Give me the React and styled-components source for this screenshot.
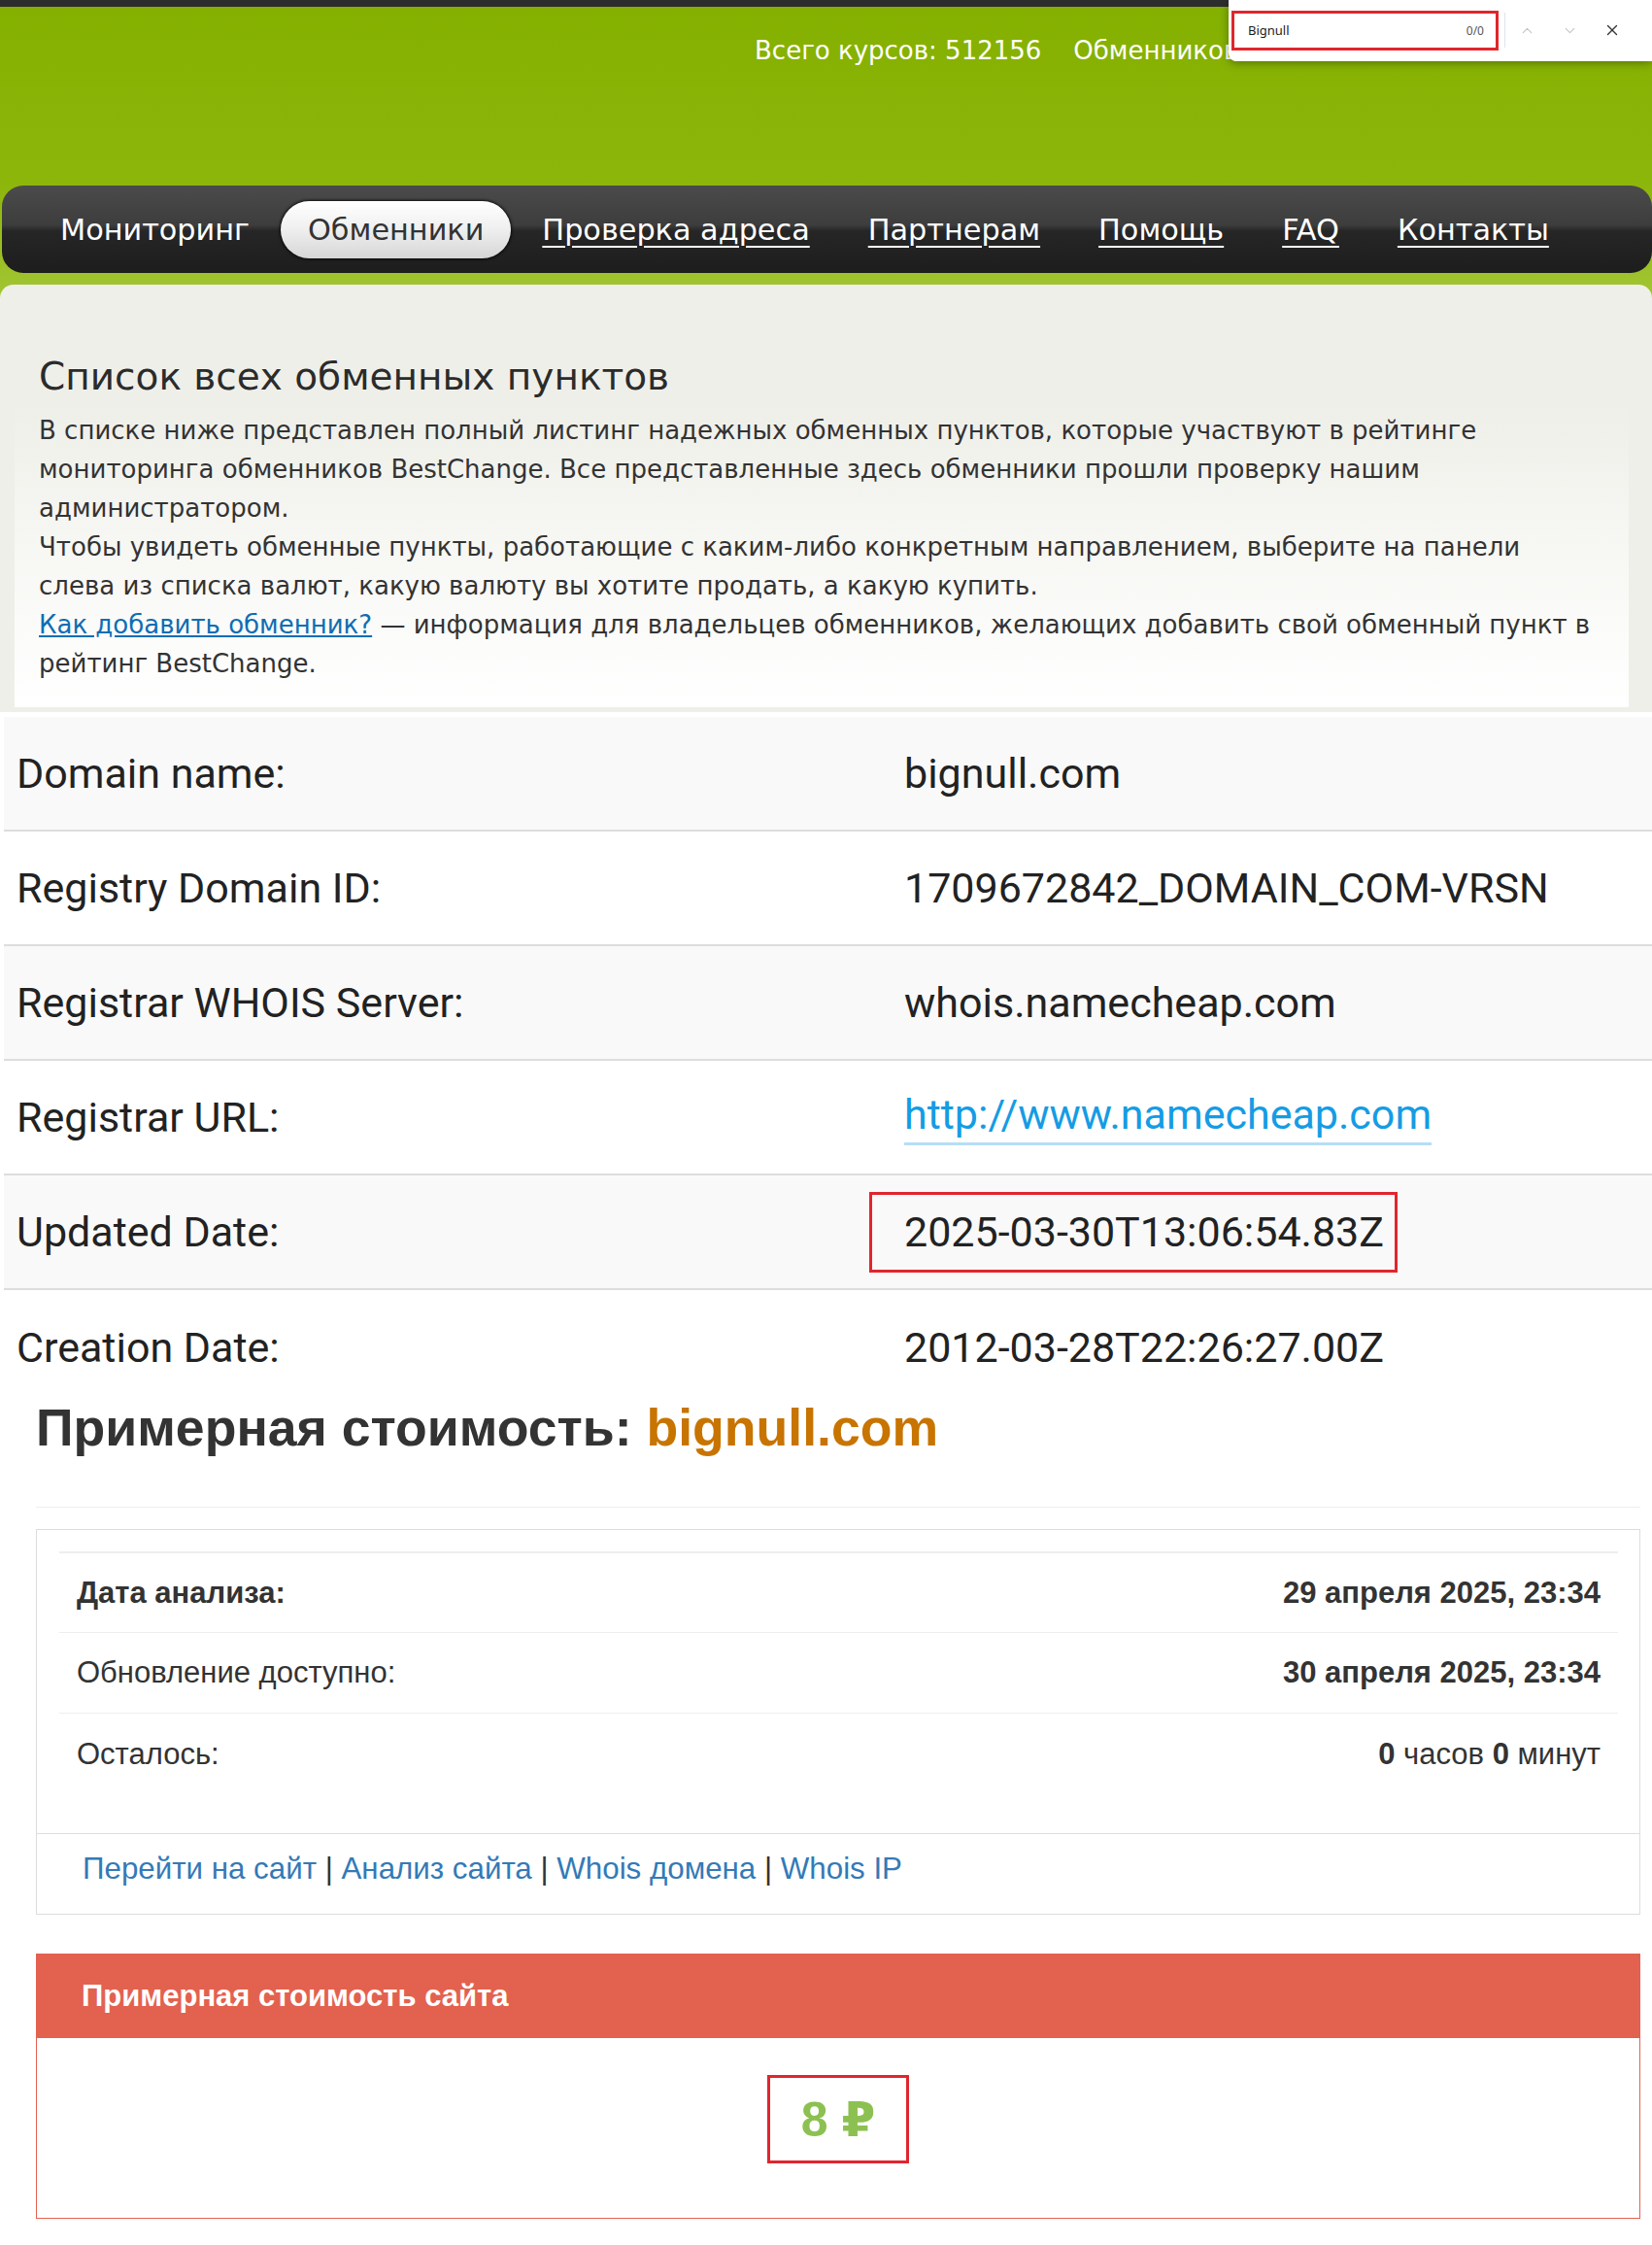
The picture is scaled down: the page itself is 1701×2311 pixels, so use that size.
import React from 'react'
import styled, { createGlobalStyle } from 'styled-components'
import { ChevronUp, ChevronDown, X } from 'lucide-react'

const GlobalStyle = createGlobalStyle`
  body {
    margin: 0;
    background: #fff;
    font-family: "Liberation Sans", Arial, sans-serif;
  }
  * { box-sizing: border-box; }
`

const colors = {
  dark: '#2d2d2d',
  text: '#333',
  grey: '#efefe9',
  red: '#e0262d',
  coral: '#e3614f',
  green: '#8cc152',
}

const tahoma = `"DejaVu Sans", Verdana, sans-serif`
const arial = `"Liberation Sans", Arial, "DejaVu Sans", sans-serif`

const Page = styled.div`
  position: relative;
  width: 1701px;
  padding-bottom: 27px;
  border-top: 7px solid ${colors.dark};
  background-color: #fff;
  background-image: linear-gradient(180deg, #84b000 0px, #8db60b 180px, #a0c430 290px);
  background-size: 100% 300px;
  background-repeat: no-repeat;
`

const Stats = styled.div`
  display: flex;
  gap: 33px;
  height: 184px;
  padding: 29px 0 0 777px;
  font-family: ${tahoma};
  font-size: 26px;
  line-height: 32px;
  color: #fff;
  white-space: nowrap;
  overflow: hidden;
`

const Nav = styled.nav`
  display: flex;
  align-items: center;
  gap: 4px;
  height: 90px;
  margin-left: 2px;
  padding-left: 32px;
  border-radius: 22px;
  background: linear-gradient(180deg, #4b4b4b 0%, #3d3d3d 45%, #262626 52%, #1d1d1d 100%);
`

const NavItem = styled.a`
  display: inline-flex;
  align-items: center;
  height: 59px;
  padding: 0 28px;
  font-family: ${tahoma};
  font-size: 30.3px;
  color: #fff;
  white-space: nowrap;
  text-decoration: ${({ $underline }) => ($underline ? 'underline' : 'none')};
  text-decoration-thickness: 2px;
  text-underline-offset: 6px;
`

const NavPill = styled(NavItem)`
  border-radius: 30px;
  color: #333;
  background: linear-gradient(180deg, #ffffff 0%, #f1f1f1 45%, #d6d6d6 100%);
  box-shadow: 0 0 3px 1px rgba(0, 0, 0, 0.8);
`

const Content = styled.div`
  margin-top: 12px;
  padding: 72px 24px 5px 15px;
  background: ${colors.grey};
  border-radius: 14px 14px 0 0;
`

const Title = styled.h1`
  margin: 0 0 4px;
  padding-left: 25px;
  font-family: ${tahoma};
  font-weight: normal;
  font-size: 39px;
  line-height: 46px;
  color: #2b2b2b;
`

const Intro = styled.div`
  padding: 8px 25px 25px;
  background: linear-gradient(180deg, ${colors.grey} 0%, #fff 100%);
  font-family: ${tahoma};
  font-size: 26px;
  line-height: 40px;
  color: ${colors.text};
  white-space: nowrap;
`

const IntroLink = styled.a`
  color: #0e6db3;
  text-decoration: underline;
`

const Whois = styled.div`
  margin: 5px 0 0 4px;
`

const WhoisRow = styled.div`
  display: grid;
  grid-template-columns: 914px 1fr;
  align-items: center;
  height: 118px;
  padding-left: 13px;
  background: ${({ $shade }) => ($shade ? '#f9f9f9' : '#fff')};
  border-bottom: ${({ $last }) => ($last ? 'none' : '2px solid #ddd')};
  font-family: Roboto, "Liberation Sans", sans-serif;
  font-size: 43px;
  line-height: 50px;
  color: #222;
`

const Value = styled.span`
  position: relative;
  justify-self: start;
`

const Marked = styled(Value)`
  &::after {
    content: '';
    position: absolute;
    left: -36px;
    right: -14px;
    top: -16px;
    bottom: -17px;
    border: 3px solid ${colors.red};
  }
`

const UrlLink = styled.a`
  display: inline-block;
  padding-bottom: 4px;
  color: #159ce4;
  text-decoration: none;
  border-bottom: 3px solid #b6def5;
`

const Estimate = styled.section`
  padding: 0 12px 0 37px;
  font-family: ${arial};
  color: ${colors.text};
`

const EstimateTitle = styled.h2`
  margin: 0;
  font-size: 53.6px;
  line-height: 46px;
  font-weight: bold;
  color: #333;

  span {
    color: #c87400;
  }
`

const Divider = styled.hr`
  margin: 59px 0 0;
  border: 0;
  border-top: 1px solid #eee;
`

const Card = styled.div`
  margin-top: ${({ $gap }) => $gap}px;
  border: 1px solid ${({ $accent }) => $accent || '#ddd'};
  background: #fff;
`

const CardBody = styled.div`
  padding: 22px 22px 40px 23px;
`

const InfoRow = styled.div`
  display: flex;
  justify-content: space-between;
  align-items: center;
  height: ${({ $first }) => ($first ? '84px' : '83px')};
  padding: 0 18px;
  border-top: ${({ $first }) => ($first ? '2px solid #eee' : 'none')};
  border-bottom: ${({ $last }) => ($last ? 'none' : '1px solid #eee')};
  font-size: 31px;
  color: #333;
`

const Label = styled.span`
  font-weight: ${({ $bold }) => ($bold ? 'bold' : 'normal')};
`

const Strong = styled.b`
  font-weight: bold;
`

const CardFooter = styled.div`
  padding: 20px 47px 30px;
  border-top: 1px solid #ddd;
  font-size: 31.3px;
  line-height: 32px;
  color: #333;
`

const FooterLink = styled.a`
  color: #337ab7;
  text-decoration: none;
`

const CardHeader = styled.div`
  display: flex;
  align-items: center;
  height: 86px;
  padding-left: 46px;
  background: ${colors.coral};
  font-size: 31px;
  font-weight: bold;
  color: #fff;
`

const PriceBody = styled.div`
  display: flex;
  justify-content: center;
  padding: 38px 0 56px;
`

const Price = styled.div`
  display: flex;
  align-items: center;
  justify-content: center;
  width: 146px;
  height: 91px;
  border: 3px solid ${colors.red};
  font-size: 50px;
  font-weight: bold;
  color: ${colors.green};
`

/* browser find bar laid over the top right corner */
const FindBar = styled.div`
  position: absolute;
  top: -7px;
  right: 0;
  display: flex;
  align-items: center;
  width: 436px;
  height: 63px;
  padding: 7px 0 8px 3px;
  background: #fff;
  border-bottom-left-radius: 8px;
  box-shadow: 0 2px 10px rgba(0, 0, 0, 0.35);
  font-family: "Noto Sans", "DejaVu Sans", sans-serif;
`

const FindInput = styled.div`
  display: flex;
  align-items: center;
  justify-content: space-between;
  width: 275px;
  height: 41px;
  padding: 0 12px 0 14px;
  border: 3px solid ${colors.red};
  font-size: 13px;
  color: #1b1b1b;
`

const FindCount = styled.span`
  font-size: 12px;
  color: #555;
`

const FindSep = styled.div`
  width: 1px;
  height: 36px;
  margin-left: 6px;
  background: #dfe3ea;
`

const FindButton = styled.div`
  display: flex;
  align-items: center;
  justify-content: center;
  width: 44px;
  color: ${({ $muted }) => ($muted ? '#c4c4c4' : '#333')};
`

const navItems = [
  { label: 'Мониторинг' },
  { label: 'Обменники', active: true },
  { label: 'Проверка адреса', underline: true },
  { label: 'Партнерам', underline: true },
  { label: 'Помощь', underline: true },
  { label: 'FAQ', underline: true },
  { label: 'Контакты', underline: true },
]

const whoisRows = [
  ['Domain name:', 'bignull.com'],
  ['Registry Domain ID:', '1709672842_DOMAIN_COM-VRSN'],
  ['Registrar WHOIS Server:', 'whois.namecheap.com'],
  ['Registrar URL:', 'http://www.namecheap.com', 'link'],
  ['Updated Date:', '2025-03-30T13:06:54.83Z', 'marked'],
  ['Creation Date:', '2012-03-28T22:26:27.00Z'],
]

export default function App() {
  return (
    <Page>
      <GlobalStyle />
      <Stats>
        <span>Всего курсов: 512156</span>
        <span>Обменников: 427</span>
      </Stats>
      <Nav>
        {navItems.map((item) =>
          item.active ? (
            <NavPill key={item.label}>{item.label}</NavPill>
          ) : (
            <NavItem key={item.label} $underline={item.underline}>
              {item.label}
            </NavItem>
          )
        )}
      </Nav>

      <Content>
        <Title>Список всех обменных пунктов</Title>
        <Intro>
          В списке ниже представлен полный листинг надежных обменных пунктов, которые участвуют в рейтинге
          <br />
          мониторинга обменников BestChange. Все представленные здесь обменники прошли проверку нашим
          <br />
          администратором.
          <br />
          Чтобы увидеть обменные пункты, работающие с каким-либо конкретным направлением, выберите на панели
          <br />
          слева из списка валют, какую валюту вы хотите продать, а какую купить.
          <br />
          <IntroLink>Как добавить обменник?</IntroLink> — информация для владельцев обменников, желающих
          добавить свой обменный пункт в
          <br />
          рейтинг BestChange.
        </Intro>
      </Content>

      <Whois>
        {whoisRows.map(([label, value, kind], i) => (
          <WhoisRow key={label} $shade={i % 2 === 0} $last={i === whoisRows.length - 1}>
            <span>{label}</span>
            {kind === 'link' ? (
              <Value><UrlLink>{value}</UrlLink></Value>
            ) : kind === 'marked' ? (
              <Marked>{value}</Marked>
            ) : (
              <Value>{value}</Value>
            )}
          </WhoisRow>
        ))}
      </Whois>

      <Estimate>
        <EstimateTitle>
          Примерная стоимость: <span>bignull.com</span>
        </EstimateTitle>
        <Divider />

        <Card $gap={22}>
          <CardBody>
            <InfoRow $first>
              <Label $bold>Дата анализа:</Label>
              <Strong>29 апреля 2025, 23:34</Strong>
            </InfoRow>
            <InfoRow>
              <Label>Обновление доступно:</Label>
              <Strong>30 апреля 2025, 23:34</Strong>
            </InfoRow>
            <InfoRow $last>
              <Label>Осталось:</Label>
              <span><Strong>0</Strong> часов <Strong>0</Strong> минут</span>
            </InfoRow>
          </CardBody>
          <CardFooter>
            <FooterLink>Перейти на сайт</FooterLink> | <FooterLink>Анализ сайта</FooterLink> |{' '}
            <FooterLink>Whois домена</FooterLink> | <FooterLink>Whois IP</FooterLink>
          </CardFooter>
        </Card>

        <Card $gap={40} $accent={colors.coral}>
          <CardHeader>Примерная стоимость сайта</CardHeader>
          <PriceBody>
            <Price>8 ₽</Price>
          </PriceBody>
        </Card>
      </Estimate>

      <FindBar>
        <FindInput>
          <span>Bignull</span>
          <FindCount>0/0</FindCount>
        </FindInput>
        <FindSep />
        <FindButton $muted><ChevronUp size={17} strokeWidth={1.6} /></FindButton>
        <FindButton $muted><ChevronDown size={17} strokeWidth={1.6} /></FindButton>
        <FindButton><X size={18} strokeWidth={1.8} /></FindButton>
      </FindBar>
    </Page>
  )
}
